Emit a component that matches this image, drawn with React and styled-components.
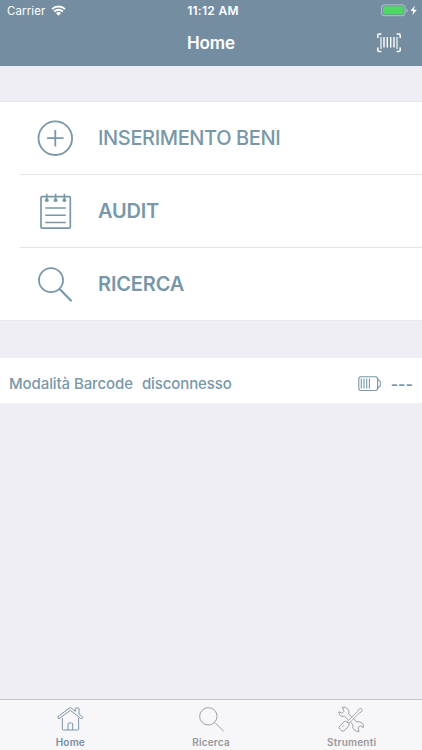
import React from "react";
import styled, { createGlobalStyle } from "styled-components";

const menuItems = [
  { label: "INSERIMENTO BENI", icon: "add", spacing: "-0.37px", weight: 450 },
  { label: "AUDIT", icon: "notes", spacing: "-0.2px", weight: 580 },
  { label: "RICERCA", icon: "search", spacing: "-0.15px", weight: 580 },
];

const tabs = [
  { label: "Home", icon: "home", active: true },
  { label: "Ricerca", icon: "find" },
  { label: "Strumenti", icon: "tools" },
];

const App = () => {
  return (
    <>
      <GlobalStyle />
      <Screen>
        <Header>
          <StatusBar>
            <Carrier>
              Carrier
              <WifiIcon />
            </Carrier>
            <Time>11:12 AM</Time>
            <Power>
              <PowerIcon />
            </Power>
          </StatusBar>
          <NavBar>
            <Title>Home</Title>
            <ScanButton aria-label="barcode">
              <BarcodeIcon />
            </ScanButton>
          </NavBar>
        </Header>
        <Main>
          <Menu>
            {menuItems.map((item) => (
              <MenuRow key={item.label}>
                <MenuIcon name={item.icon} />
                <MenuLabel $spacing={item.spacing} $weight={item.weight}>
                  {item.label}
                </MenuLabel>
              </MenuRow>
            ))}
          </Menu>
          <Reader>
            <Mode>Modalità Barcode</Mode>
            <Mode>disconnesso</Mode>
            <Level>
              <ReaderBattery />
              <Dashes>---</Dashes>
            </Level>
          </Reader>
        </Main>
        <TabBar>
          {tabs.map((tab) => (
            <Tab key={tab.label} $active={tab.active}>
              <TabIcon name={tab.icon} />
              <TabLabel>{tab.label}</TabLabel>
            </Tab>
          ))}
        </TabBar>
      </Screen>
    </>
  );
};

const WifiIcon = () => (
  <svg width="15" height="11" viewBox="0 0 15 11" fill="none">
    <path d="M1 4.1a9.4 9.4 0 0 1 13 0" stroke="#fff" strokeWidth="1.9" />
    <path d="M3.2 6.5a6.1 6.1 0 0 1 8.6 0" stroke="#fff" strokeWidth="1.8" />
    <path d="M5.1 8.2a3.5 3.5 0 0 1 4.8 0L7.5 10.7z" fill="#fff" />
  </svg>
);

const PowerIcon = () => (
  <svg width="37" height="13" viewBox="0 0 37 13">
    <rect x="0.6" y="0.9" width="23.4" height="10.8" rx="2.4" fill="none" stroke="#b4c3cd" strokeWidth="1" />
    <rect x="2" y="2.3" width="20.6" height="8" rx="1.1" fill="#4cd964" />
    <path d="M25.4 4.4q1.3.5 1.3 1.9t-1.3 1.9z" fill="#b4c3cd" />
    <path d="M33.8 1.5 29.5 7h2.9l-1.1 4.3L35.8 5.8h-3z" fill="#fff" />
  </svg>
);

const BarcodeIcon = () => (
  <svg width="24" height="20" viewBox="0 0 24 20" fill="none" stroke="#fff">
    <path
      d="M.8 5V2.2Q.8.9 2.1.9H4.4M19.6.9h2.3q1.3 0 1.3 1.3V5M23.2 14.5v2.8q0 1.3-1.3 1.3h-2.3M4.4 18.6H2.1q-1.3 0-1.3-1.3v-2.8"
      strokeWidth="1.5"
    />
    <path d="M4 4v12M20 4v12" strokeWidth="1.1" />
    <path d="M7 4v10.5M10.3 4v10.5M13.7 4v10.5M17 4v10.5" strokeWidth="1.4" />
  </svg>
);

// menu icons share a 36px box
const MenuIcon = ({ name }) => (
  <svg width="36" height="36" viewBox="0 0 36 36" fill="none" stroke="#7898a8" strokeWidth="1.8">
    {name === "add" && (
      <>
        <circle cx="18.3" cy="18.2" r="16.8" />
        <path d="M18.3 10v16.4M10.1 18.2h16.4" />
      </>
    )}
    {name === "notes" && (
      <>
        <rect x="4" y="3.7" width="29.3" height="31.4" rx="1" strokeWidth="1.7" />
        <path d="M9.8.8v6.4M18.6.8v6.4M27.4.8v6.4" strokeWidth="1.5" />
        <g fill="#7898a8" stroke="none">
          <circle cx="9.8" cy="7.2" r="1.9" />
          <circle cx="18.6" cy="7.2" r="1.9" />
          <circle cx="27.4" cy="7.2" r="1.9" />
        </g>
        <path d="M8.2 15h20.6M8.2 22.2h20.6M8.2 29.5h20.6" strokeWidth="1.6" />
      </>
    )}
    {name === "search" && (
      <>
        <circle cx="14" cy="14.2" r="12" />
        <path d="M22.4 22.8 34.6 35.2" strokeWidth="2.2" />
      </>
    )}
  </svg>
);

const ReaderBattery = () => (
  <svg width="23" height="16" viewBox="0 0 23 16" fill="none" stroke="#7898a8">
    <rect x=".8" y=".7" width="18.8" height="13.8" rx="2.2" strokeWidth="1.1" />
    <path d="M19.6 3.2h1.2v1.8h1.5v5.2h-1.5V12h-1.2" strokeWidth="1" />
    <path d="M3.3 2.6v10M6 2.6v10M8.7 2.6v10M11.4 2.6v10" strokeWidth="1.1" />
  </svg>
);

const TabIcon = ({ name }) => (
  <svg width="27" height="27" viewBox="0 0 81 81" fill="none" stroke="currentColor" strokeWidth="2.8" strokeLinejoin="round">
    {name === "home" && (
      <>
        <path d="M4 31 36 7q4-3 8 0l11 9V8q0-2 2-2h7q2 0 2 2v16l10 8q3 3 0 5t-5 0L40 13 9 36q-3 3-6 0-1-2 1-5z" />
        <path d="M16 36v33q0 3 3 3h43q3 0 3-3V36M33 72V54q0-3 3-3h8q3 0 3 3v18" />
      </>
    )}
    {name === "find" && (
      <>
        <circle cx="31" cy="31" r="26" />
        <path d="m50 49 27 27" />
      </>
    )}
    {name === "tools" && (
      <>
        <path d="M13 4q12-3 18 7 3 6 1 13l24 24q9-3 16 3 6 6 4 14l-9-6-7 6 3 12q-9 0-15-6t-3-15L20 31q-10 2-15-4-3-4-2-10l9 5 6-6z" />
        <path d="m28 47 31-31 3-6 8-3 3 3-3 8-6 3-31 31z" fill="#f7f7f9" strokeWidth="2.4" />
        <path d="M19 47q4-3 8 1l4 4q4 4 1 8L20 73q-5 5-10 1l-5-5q-4-5 1-10z" fill="#f7f7f9" />
        <path d="M19 57 12 64" strokeWidth="2.2" />
      </>
    )}
  </svg>
);

const GlobalStyle = createGlobalStyle`
  * {
    box-sizing: border-box;
  }
  body {
    margin: 0;
    font-family: Inter, "Liberation Sans", sans-serif;
  }
`;

const Screen = styled.div`
  display: flex;
  flex-direction: column;
  height: 750px;
  background-color: #efeef4;
`;

const Header = styled.header`
  height: 66px;
  background-color: #758da1;
  color: white;
`;

const StatusBar = styled.div`
  display: grid;
  grid-template-columns: 1fr auto 1fr;
  align-items: center;
  height: 21px;
  padding: 0 4px 0 7px;
`;

const Carrier = styled.div`
  display: flex;
  align-items: center;
  gap: 6px;
  font-size: 11.5px;
  letter-spacing: 0.1px;
`;

const Time = styled.div`
  padding-left: 1px;
  font-size: 12px;
  font-weight: 600;
  letter-spacing: 0.3px;
`;

const Power = styled.div`
  display: flex;
  justify-content: flex-end;
`;

const NavBar = styled.div`
  display: grid;
  grid-template-columns: 1fr auto 1fr;
  align-items: center;
  height: 44px;
  padding: 0 21px;
`;

const Title = styled.h1`
  grid-column: 2;
  margin: 0;
  font-size: 17px;
  line-height: 20px;
  font-weight: 600;
  letter-spacing: -0.1px;
`;

const ScanButton = styled.button`
  display: flex;
  justify-self: end;
  padding: 0;
  border: none;
  background: none;
`;

const Main = styled.main`
  flex: 1;
  padding-top: 35px;
`;

const Menu = styled.div`
  border-top: 1px solid #e3e3e8;
  border-bottom: 1px solid #e8e8ed;
  background-color: white;
`;

const MenuRow = styled.div`
  display: flex;
  align-items: center;
  gap: 25px;
  height: 73px;
  margin-left: 20px;
  padding-left: 17px;

  &:first-child {
    height: 72px;
  }

  & + & {
    border-top: 1px solid #e3e4e7;
  }
`;

const MenuLabel = styled.span`
  color: #7898a8;
  font-size: 20px;
  font-weight: ${(props) => props.$weight};
  letter-spacing: ${(props) => props.$spacing};
`;

const Reader = styled.div`
  display: flex;
  align-items: center;
  gap: 9px;
  height: 45px;
  margin-top: 37px;
  padding: 6px 9px 0;
  background-color: white;
  color: #7898a8;
`;

const Mode = styled.span`
  font-size: 15px;
  font-weight: 450;
  letter-spacing: -0.1px;
`;

const Level = styled.div`
  display: flex;
  align-items: center;
  gap: 10px;
  margin-left: auto;
`;

const Dashes = styled.span`
  font-size: 16px;
  font-weight: 600;
`;

const TabBar = styled.nav`
  display: flex;
  height: 51px;
  border-top: 1px solid #c3c2c7;
  background-color: #f7f7f9;
`;

const Tab = styled.div`
  flex: 1;
  display: flex;
  flex-direction: column;
  align-items: center;
  padding-top: 6px;
  color: ${(props) => (props.$active ? "#758da1" : "#98989b")};
`;

const TabLabel = styled.span`
  margin-top: 2px;
  font-size: 10px;
  line-height: 15px;
  font-weight: 600;
  letter-spacing: 0.2px;
`;

export default App;
